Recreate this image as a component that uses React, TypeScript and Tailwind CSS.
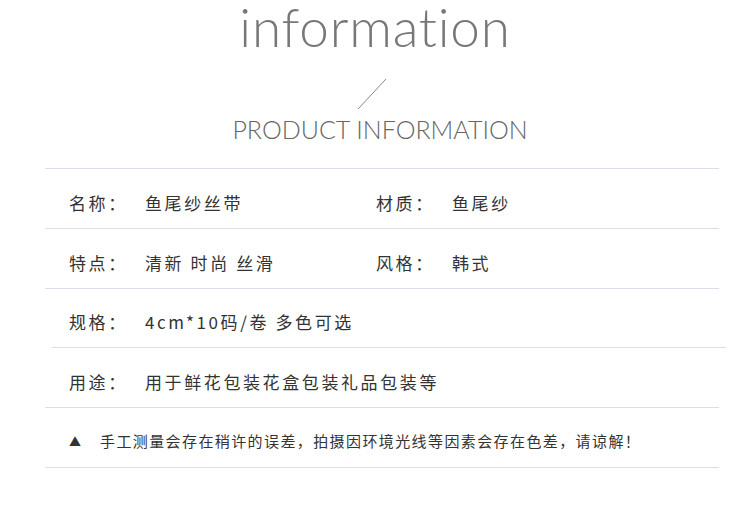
const rows = [
  [
    ["名称：", "鱼尾纱丝带"],
    ["材质：", "鱼尾纱"],
  ],
  [
    ["特点：", "清新 时尚 丝滑"],
    ["风格：", "韩式"],
  ],
];

const cjk = "font-['Noto_Sans_CJK_SC','Noto_Sans',sans-serif]";

function Cell({ label, value }: { label: string; value: string }) {
  return (
    <div className="flex items-center">
      <span className="w-[76px] shrink-0 tracking-[2.6px]">{label}</span>
      <span className="tracking-[2.6px]">{value}</span>
    </div>
  );
}

export default function App() {
  return (
    <div className={`w-[750px] h-[520px] bg-white overflow-hidden text-[#333] ${cjk}`}>
      {/* Heading */}
      <div className="h-[168px] flex flex-col items-center">
        <h1 className="font-['Lato',sans-serif] font-light text-[53px] leading-[54px] text-[#777] tracking-[0.8px] [font-variant-ligatures:none]">
          information
        </h1>
        <svg width="30" height="32" viewBox="0 0 30 32" className="mt-[24px] ml-[-6px]">
          <line x1="1" y1="31" x2="29" y2="1" stroke="#888" strokeWidth="1" />
        </svg>
        <div className="mt-[4px] ml-[10px] font-['Lato',sans-serif] font-light text-[25px] leading-[30px] text-[#666]">
          PRODUCT INFORMATION
        </div>
      </div>

      <div className="w-[674px] ml-[45px]">
        {rows.map((r, i) => (
          <div key={i} className="h-[60px] border-t border-[#dcdcea] flex items-center pl-[24px] pt-[8px] text-[17px]">
            <div className="w-[307px]">
              <Cell label={r[0][0]} value={r[0][1]} />
            </div>
            <Cell label={r[1][0]} value={r[1][1]} />
          </div>
        ))}
        <div className="h-[59px] border-t border-[#dcdcea] flex items-center pl-[24px] pt-[8px] text-[17px]">
          <Cell label="规格：" value="4cm*10码/卷 多色可选" />
        </div>
      </div>
      <div className="w-[674px] ml-[52px] border-t border-[#dcdcea]" />
      <div className="w-[674px] ml-[45px]">
        <div className="h-[59px] flex items-center pl-[24px] pt-[8px] text-[17px]">
          <Cell label="用途：" value="用于鲜花包装花盒包装礼品包装等" />
        </div>
        <div className="h-[60px] border-t border-[#dcdcea] flex items-center pl-[24px] pt-[8px] text-[15px]">
          <span className="w-[31px] shrink-0 text-[12px]">▲</span>
          <span className="tracking-[1.4px]">手工测量会存在稍许的误差，拍摄因环境光线等因素会存在色差，请谅解！</span>
        </div>
        <div className="border-t border-[#dcdcea]" />
      </div>
    </div>
  );
}
